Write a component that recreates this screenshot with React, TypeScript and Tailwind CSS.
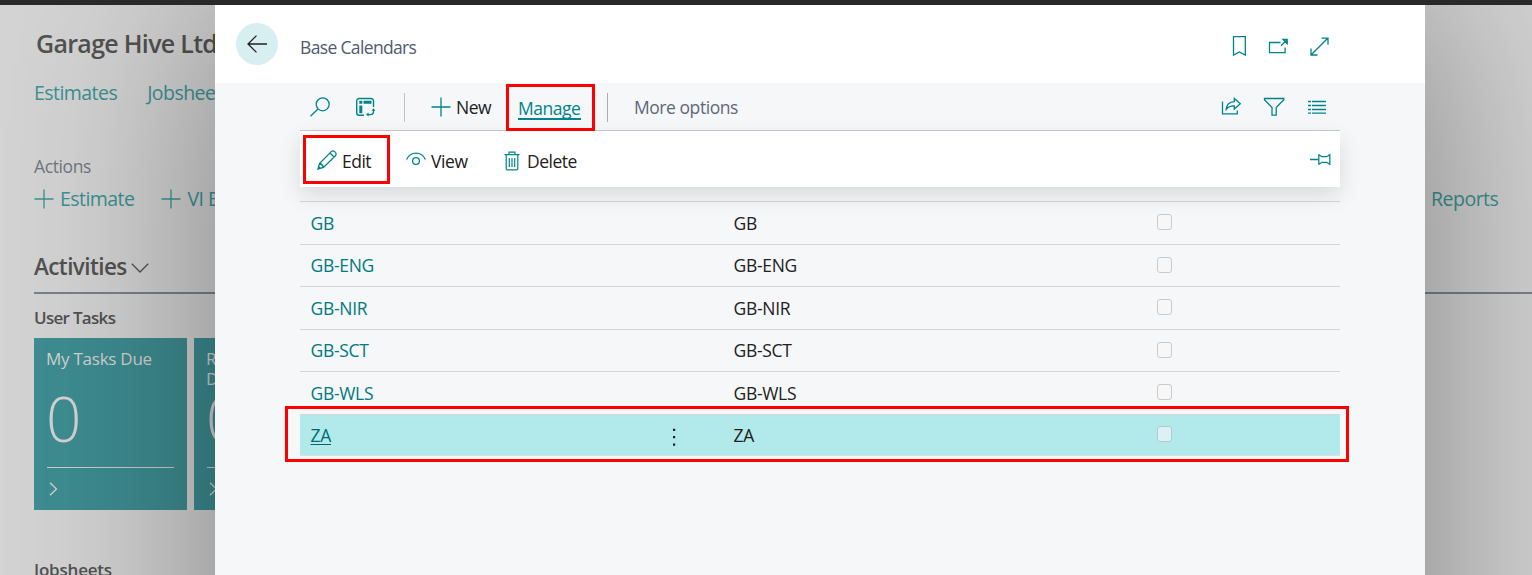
import type { ReactNode } from "react";

const rows = [
  { code: "GB", name: "GB", height: "h-[43px] leading-[42px]" },
  { code: "GB-ENG", name: "GB-ENG", height: "h-[42px] leading-[41px]" },
  { code: "GB-NIR", name: "GB-NIR", height: "h-[43px] leading-[42px]" },
  { code: "GB-SCT", name: "GB-SCT", height: "h-[42px] leading-[41px]" },
  { code: "GB-WLS", name: "GB-WLS", height: "h-[43px] leading-[42px]" },
  { code: "ZA", name: "ZA", height: "h-[42px] leading-[41px]", selected: true },
];

function Icon({ w, h, className = "", children }: { w: number; h: number; className?: string; children: ReactNode }) {
  return (
    <svg width={w} height={h} viewBox={`0 0 ${w} ${h}`} fill="none" stroke="currentColor" strokeWidth="1.3" className={`block shrink-0 ${className}`}>
      {children}
    </svg>
  );
}

function Plus({ className = "" }: { className?: string }) {
  return (
    <Icon w={20} h={20} className={className}>
      <path d="M10 .5v19M.5 10h19" />
    </Icon>
  );
}

function Tile({ title }: { title: string }) {
  return (
    <div className="flex h-[172px] w-[153px] shrink-0 flex-col bg-[#3e8d92] px-[13px] text-[#d4d4d4]">
      <div className="-ml-px h-[50px] pt-[11px] text-[17px] leading-5 tracking-[-0.25px] whitespace-pre-line">{title}</div>
      <div className="h-[80px] border-b border-[#c9cfcf] text-[62px] leading-[60px] font-light tracking-[-2px]">
        <span className="-ml-px inline-block origin-left">0</span>
      </div>
      <Icon w={10} h={14} className="mt-[14px] ml-[2px]">
        <path d="M1 .8 7.5 7 1 13.2" />
      </Icon>
    </div>
  );
}

function Background() {
  return (
    <div className="h-[570px] w-[215px] shrink-0 overflow-hidden bg-[#d4d4d4] pl-[34px] whitespace-nowrap text-[#525252]">
      <h1 className="mt-[20px] ml-[2px] h-9 text-[25px] leading-9 font-semibold tracking-[-0.7px]">Garage Hive Ltd</h1>
      <nav className="mt-[17px] flex gap-[30px] text-[19.5px] leading-[30px] tracking-[-0.55px] text-[#3b9193]">
        <span>Estimates</span>
        <span>Jobsheets</span>
      </nav>
      <div className="mt-[46px] text-[17.5px] leading-6 tracking-[-0.4px] text-[#717782]">Actions</div>
      <div className="mt-[9px] flex gap-[27px] text-[19.5px] leading-6 tracking-[-0.55px] text-[#3b9193]">
        <span className="flex items-center gap-[6px]"><Plus />Estimate</span>
        <span className="flex items-center gap-[6px]"><Plus />VI E</span>
      </div>
      <div className="mt-[38px] flex h-[45px] w-[400px] items-start border-b-2 border-[#7b8090]">
        <h2 className="text-[22.5px] leading-[36px] font-semibold tracking-[-0.6px]">Activities</h2>
        <Icon w={18} h={10} className="mt-[14px] ml-1"><path d="M.8.8 9 9 17.2.8" /></Icon>
      </div>
      <div className="mt-3 text-[17px] leading-6 font-semibold tracking-[-0.7px]">User Tasks</div>
      <div className="mt-2 flex gap-[7px]">
        <Tile title="My Tasks Due" />
        <Tile title={"R\nD"} />
      </div>
      <div className="mt-[48px] text-[17px] leading-6 font-semibold tracking-[-0.2px]">Jobsheets</div>
    </div>
  );
}

function Header() {
  return (
    <header className="flex h-[78px] items-start bg-white pl-[21px]">
      <div className="mt-[18px] flex size-[42px] items-center justify-center rounded-full bg-[#d8eff1] text-[#212121]">
        <Icon w={20} h={18}><path d="M9.5.6 1 9l8.5 8.4M1 9h19" /></Icon>
      </div>
      <div className="mt-[30px] ml-[22px] text-[17.5px] leading-6 tracking-[-0.65px] text-[#505c6d]">Base Calendars</div>
      <div className="mt-[31px] mr-[96px] ml-auto flex items-start gap-[23px] text-[#00848b]">
        <Icon w={14} h={20} className="-mr-px"><path d="M1.5.7h11.8v18.4L7.4 16l-5.9 3.1z" /></Icon>
        <Icon w={20} h={17} className="mt-[2px]">
          <path d="M12.5 4.5h-11v10.2h15.6V9.5" />
          <path d="m13 7.7 5.5-5.5M15 1.5h4.2v4.2z" />
        </Icon>
        <Icon w={19} h={19} className="-ml-[1px] mt-[1px]">
          <path d="m1.5 17.5 16-16M11.5 1.2h6.5v6.5M1 11.5V18h6.5" />
        </Icon>
      </div>
    </header>
  );
}

function Toolbar() {
  return (
    <div className="flex h-[48px] items-center border-b border-[#c8cace] pt-px pl-[9px] text-[17.5px] text-[#212121]">
      <Icon w={22} h={20} className="text-[#00848b]">
        <circle cx="13.7" cy="7.3" r="6.5" /><path d="M9 12 1.5 19.3" />
      </Icon>
      <Icon w={20} h={20} className="ml-[24px] text-[#00848b]">
        <path d="M18.5 10V4a2.5 2.5 0 0 0-2.5-2.5H4.2A2.5 2.5 0 0 0 1.7 4v11.8a2.5 2.5 0 0 0 2.5 2.5H9" strokeWidth="1.4" />
        <path d="M4.3 3.8h3v3h-3zM8.5 3.8h8v3h-8zM4.3 8.5h3v7.7h-3z" fill="currentColor" stroke="none" />
        <path d="M18.5 13v1.8a2.8 2.8 0 0 1-2.8 2.8H13" strokeWidth="1.3" />
        <path d="m18.5 11.2 2 2.6h-4zM11 17.6l2.6-2v4z" fill="currentColor" stroke="none" />
      </Icon>
      <div className="ml-[29px] h-[29px] w-px bg-[#bfc2ca]" />
      <Plus className="ml-[26px] text-[#00848b]" />
      <span className="ml-[5px] w-[50px] pt-px tracking-[-0.5px]">New</span>
      <div className="relative ml-3 w-[63px] text-[#00848b]">
        <span className="block h-[25px] border-b-2 pt-px leading-[24px] tracking-[-0.5px]">Manage</span>
        <div className="absolute -top-[11px] -left-3 h-[47px] w-[89px] border-3 border-[#ff0000]" />
      </div>
      <div className="ml-[26px] h-[29px] w-px bg-[#a9acb9]" />
      <span className="ml-[26px] pt-px tracking-[-0.45px] text-[#5f6878]">More options</span>
      <div className="mr-[14px] ml-auto flex items-center gap-[22px] text-[#00848b]">
        <Icon w={21} h={18} className="-mt-[2px]">
          <path d="M1.5 4.5v12.3h14.8V13.5" />
          <path d="M5.3 12.3C5.6 7.5 8.3 4.9 13.3 4.6V1.4l6 5.3-6 5.3V8.8C9.3 8.7 7.3 9.5 5.3 12.3z" />
        </Icon>
        <Icon w={22} h={19} className="-mt-px -ml-px mr-px"><path d="M1.5 1.5h19.3v1.3L13.2 10.5v7.6H9v-7.6L1.5 2.8z" /></Icon>
        <Icon w={18} h={14}><path d="M0 1.5h3M4 1.5h14M0 5.5h3M4 5.5h14M0 9.5h3M4 9.5h14M0 13.2h3M4 13.2h14" strokeWidth="1.3" /></Icon>
      </div>
    </div>
  );
}

function ActionBar() {
  return (
    <div className="relative z-10 flex h-[56px] items-center bg-white pt-[3px] pl-[17px] text-[17.5px] text-[#212121] shadow-[0_8px_22px_rgba(0,0,0,0.12)]">
      <Icon w={20} h={20} className="-mt-px text-[#00848b]">
        <path d="m1 19 1.5-5.5L14.3 1.6a2.3 2.3 0 0 1 3.3 0l.8.8a2.3 2.3 0 0 1 0 3.3L6.5 17.5zM2.5 13.5q3 .8 4 4M13 3l4.1 4.1" strokeWidth="1.3" />
        <path d="m1 19 .8-3 2.3 2.2z" fill="currentColor" stroke="none" />
      </Icon>
      <span className="ml-[5px] w-[64px] pt-px tracking-[-0.5px]">Edit</span>
      <Icon w={20} h={14} className="-mt-[4px] text-[#00848b]">
        <path d="M.6 7.5C4.5-1 15.5-1 19.4 7.5" /><circle cx="10" cy="9" r="3.4" />
      </Icon>
      <span className="ml-[5px] w-[73px] pt-px tracking-[-0.4px]">View</span>
      <Icon w={16} h={20} className="text-[#00848b]">
        <path d="M.5 3.7h15M5 3.5V1.2h6v2.3M2.2 4v13.5a1.4 1.4 0 0 0 1.4 1.4h8.8a1.4 1.4 0 0 0 1.4-1.4V4M5.3 7v9M8 7v9M10.7 7v9" strokeWidth="1.2" />
      </Icon>
      <span className="ml-[7px] pt-px tracking-[-0.5px]">Delete</span>
      <Icon w={21} h={14} className="mr-[9px] -mt-[4px] ml-auto text-[#00848b]">
        <path d="M0 7.5h8M8.8 2.3v10.4M9 2.7l3 2h4.7l3.1-2v9.6l-3.1-2H12l-3 2" />
      </Icon>
      <div className="absolute top-1 left-[3px] h-[49px] w-[87px] border-3 border-[#ff0000]" />
    </div>
  );
}

function Table() {
  return (
    <div className="mt-[14px] text-[17.5px] tracking-[-0.3px]">
      {rows.map((row) => (
        <div
          key={row.code}
          className={`relative flex items-start border-t border-[#d3d5da] pl-[10.5px] ${row.height} ${row.selected ? "border-b border-b-[#d9dfe2] bg-[#b2eaec]" : ""}`}
        >
          <span className={`w-[361px] ${row.selected ? "text-[#006a70] underline underline-offset-2" : "text-[#00797f]"}`}>{row.code}</span>
          <span className="flex h-[42px] w-[62px] items-center">
            {row.selected && (
              <svg width="4" height="18" viewBox="0 0 4 18" className="mt-px" fill="#212121">
                <path d="M1 .7h2.2v2.2H1zM1 8h2.2v2.2H1zM1 15.5h2.2v2.2H1z" />
              </svg>
            )}
          </span>
          <span className="w-[423.5px] text-[#212121]">{row.name}</span>
          <span className={`h-4 w-[15px] rounded-[3px] border ${row.selected ? "mt-[11px] border-[#b4c9cb] bg-[#dcf1f4]" : "mt-3 border-[#c9cbcc] bg-[#f7f7f7]"}`} />
          {row.selected && <div className="absolute -top-[9px] -left-[15px] h-[56px] w-[1064px] border-3 border-[#ff0000]" />}
        </div>
      ))}
    </div>
  );
}

export default function App() {
  return (
    <div className="h-[575px] w-[1532px] overflow-hidden bg-[#d4d4d4] font-['Open_Sans','Noto_Sans',sans-serif]">
      <div className="relative z-20 h-[5px] bg-[#292929]" />
      <div className="flex h-[570px]">
        <Background />
        <main className="relative z-10 h-[900px] w-[1210px] shrink-0 bg-[#f6f7f9] shadow-[0_-10px_200px_rgba(0,0,0,0.4)]">
          <Header />
          <section className="mr-[85px] ml-[85px]">
            <Toolbar />
            <ActionBar />
            <Table />
          </section>
        </main>
        <div className="w-[107px] shrink-0 bg-[#d4d4d4]">
          <div className="h-[289px] border-b-2 border-[#7b8090] pt-[179px] pl-[6px] text-[19.5px] leading-[30px] tracking-[-0.5px] text-[#3b9193]">Reports</div>
        </div>
      </div>
    </div>
  );
}
